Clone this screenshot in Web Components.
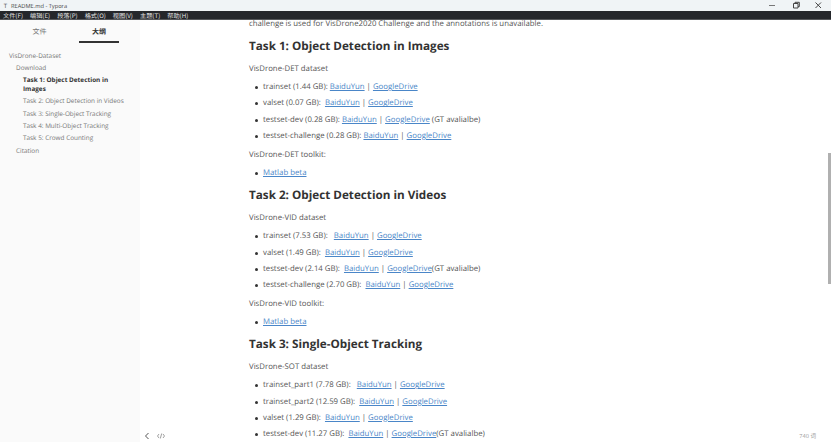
<!DOCTYPE html>
<html lang="en">
<head>
<meta charset="utf-8">
<title>README.md - Typora</title>
<style>
    html, body { margin: 0; height: 100%; overflow: hidden; background: #fff; }
    body { font-family: "Open Sans", "Noto Sans CJK SC", sans-serif; text-rendering: geometricPrecision; }
</style>
</head>
<body>
<typora-window>
    <typora-titlebar slot="titlebar" title-text="README.md - Typora"></typora-titlebar>
    <typora-menubar slot="menubar">
        <span>文件(F)</span><span>编辑(E)</span><span>段落(P)</span><span>格式(O)</span><span>视图(V)</span><span>主题(T)</span><span>帮助(H)</span>
    </typora-menubar>
    <outline-sidebar slot="sidebar">
        <outline-item level="0">VisDrone-Dataset</outline-item>
        <outline-item level="1">Download</outline-item>
        <outline-item level="2" active>Task 1: Object Detection in Images</outline-item>
        <outline-item level="2">Task 2: Object Detection in Videos</outline-item>
        <outline-item level="2">Task 3: Single-Object Tracking</outline-item>
        <outline-item level="2">Task 4: Multi-Object Tracking</outline-item>
        <outline-item level="2">Task 5: Crowd Counting</outline-item>
        <outline-item level="1">Citation</outline-item>
    </outline-sidebar>
    <md-document slot="document">
        <md-para clipped>challenge is used for VisDrone2020 Challenge and the annotations is unavailable.</md-para>
        <md-heading>Task 1: Object Detection in Images</md-heading>
        <md-para>VisDrone-DET dataset</md-para>
        <md-list>
            <md-item>trainset (1.44 GB): <md-link>BaiduYun</md-link> | <md-link>GoogleDrive</md-link></md-item>
            <md-item>valset (0.07 GB): &nbsp;<md-link>BaiduYun</md-link> | <md-link>GoogleDrive</md-link></md-item>
            <md-item>testset-dev (0.28 GB): <md-link>BaiduYun</md-link> | <md-link>GoogleDrive</md-link> (GT avalialbe)</md-item>
            <md-item>testset-challenge (0.28 GB): <md-link>BaiduYun</md-link> | <md-link>GoogleDrive</md-link></md-item>
        </md-list>
        <md-para>VisDrone-DET toolkit:</md-para>
        <md-list>
            <md-item><md-link>Matlab beta</md-link></md-item>
        </md-list>
        <md-heading>Task 2: Object Detection in Videos</md-heading>
        <md-para>VisDrone-VID dataset</md-para>
        <md-list>
            <md-item>trainset (7.53 GB): &nbsp; <md-link>BaiduYun</md-link> | <md-link>GoogleDrive</md-link></md-item>
            <md-item>valset (1.49 GB): &nbsp;<md-link>BaiduYun</md-link> | <md-link>GoogleDrive</md-link></md-item>
            <md-item>testset-dev (2.14 GB): &nbsp;<md-link>BaiduYun</md-link> | <md-link>GoogleDrive</md-link>(GT avalialbe)</md-item>
            <md-item>testset-challenge (2.70 GB): &nbsp;<md-link>BaiduYun</md-link> | <md-link>GoogleDrive</md-link></md-item>
        </md-list>
        <md-para>VisDrone-VID toolkit:</md-para>
        <md-list>
            <md-item><md-link>Matlab beta</md-link></md-item>
        </md-list>
        <md-heading>Task 3: Single-Object Tracking</md-heading>
        <md-para>VisDrone-SOT dataset</md-para>
        <md-list>
            <md-item>trainset_part1 (7.78 GB): &nbsp; <md-link>BaiduYun</md-link> | <md-link>GoogleDrive</md-link></md-item>
            <md-item>trainset_part2 (12.59 GB): &nbsp;<md-link>BaiduYun</md-link> | <md-link>GoogleDrive</md-link></md-item>
            <md-item>valset (1.29 GB): &nbsp;<md-link>BaiduYun</md-link> | <md-link>GoogleDrive</md-link></md-item>
            <md-item>testset-dev (11.27 GB): &nbsp;<md-link>BaiduYun</md-link> | <md-link>GoogleDrive</md-link>(GT avalialbe)</md-item>
        </md-list>
    </md-document>
    <typora-footer slot="footer" words="740 词"></typora-footer>
</typora-window>

<script>
function defineElement(name, markup, setup) {
    customElements.define(name, class extends HTMLElement {
        constructor() {
            super();
            this.attachShadow({mode: "open"});
            this.shadowRoot.innerHTML = markup;
            if(setup) {
                setup(this);
            }
        }
    });
}

defineElement("typora-window", `
<style>
    :host { display: grid; grid-template-columns: 140px 1fr; grid-template-rows: 11px 9px 1fr; width: 831px; height: 442px; position: relative; overflow: hidden; }
    .title { grid-column: 1 / 3; }
    .menu { grid-column: 1 / 3; }
    .main { position: relative; overflow: hidden; min-height: 0; }
    .thumb { position: absolute; right: 0; top: 133px; width: 3px; height: 131px; background: #b0b0b0; }
</style>
<div class="title"><slot name="titlebar"></slot></div>
<div class="menu"><slot name="menubar"></slot></div>
<slot name="sidebar"></slot>
<div class="main">
    <slot name="document"></slot>
    <slot name="footer"></slot>
    <div class="thumb"></div>
</div>
`);

defineElement("typora-titlebar", `
<style>
    :host { display: flex; align-items: center; height: 11px; background: #f0f4f6; color: #444; font-size: 5.7px; font-family: "Open Sans", sans-serif; }
    .logo { width: 11px; text-align: center; font-size: 6px; }
    .name { flex: 1; }
    .buttons { display: flex; }
    .buttons svg { width: 23px; height: 11px; display: block; }
</style>
<span class="logo">T</span><span class="name"></span>
<div class="buttons">
    <svg viewBox="0 0 23 11"><path d="M7 5.5h6" stroke="#777" fill="none"/></svg>
    <svg viewBox="0 0 23 11"><path d="M8.5 3.5h4.5v4.5h-4.5zM10 3.5v-1.2h4.3v4.3h-1.3" stroke="#444" fill="none"/></svg>
    <svg viewBox="0 0 23 11"><path d="M7.5 2.5l5.5 5.5M13 2.5l-5.5 5.5" stroke="#444" fill="none"/></svg>
</div>
`, (el) => {
    el.shadowRoot.querySelector(".name").textContent = el.getAttribute("title-text");
});

defineElement("typora-menubar", `
<style>
    :host { display: flex; align-items: center; height: 9px; box-sizing: border-box; background: #25272b; border-bottom: 1px solid #55575a; color: #e4e4e4; font-size: 6.2px; padding-left: 3px; gap: 7px; font-family: "Noto Sans CJK SC", "Open Sans", sans-serif; white-space: nowrap; }
</style>
<slot></slot>
`);

defineElement("outline-sidebar", `
<style>
    :host { display: block; background: #fafafa; color: #777; font-size: 6.4px; overflow: hidden; }
    .tabs { display: grid; grid-template-columns: 79px 40px; height: 24px; font-family: "Noto Sans CJK SC", sans-serif; font-size: 7px; text-align: center; }
    .tabs span { padding-top: 7px; box-sizing: border-box; }
    .tabs .on { color: #333; font-weight: 700; border-bottom: 2px solid #333; height: 23px; }
    .list { padding: 6px 4px 0 9px; display: flex; flex-direction: column; }
</style>
<div class="tabs"><span>文件</span><span class="on">大纲</span></div>
<div class="list"><slot></slot></div>
`);

defineElement("outline-item", `
<style>
    :host { display: block; line-height: 8.7px; padding: 1.8px 4px 1.8px 0; }
    :host([level="1"]) { padding-left: 7px; }
    :host([level="2"]) { padding-left: 14px; }
    :host([active]) { color: #333; font-weight: 700; }
</style>
<slot></slot>
`);

defineElement("md-document", `
<style>
    :host { display: block; width: 530px; margin-left: 109px; color: #555; font-size: 7.8px; line-height: 12px; }
</style>
<slot></slot>
`);

defineElement("md-para", `
<style>
    :host { display: block; margin: 4.5px 0; white-space: nowrap; }
    :host([clipped]) { margin: 0; height: 12.2px; transform: translateY(-2px); }
</style>
<slot></slot>
`);

defineElement("md-heading", `
<style>
    :host { display: block; font-size: 11.7px; font-weight: 700; color: #333; line-height: 18px; margin: 4.6px 0 8px; white-space: nowrap; }
</style>
<slot></slot>
`);

defineElement("md-list", `
<style>
    :host { display: block; padding-left: 14px; }
</style>
<slot></slot>
`);

defineElement("md-item", `
<style>
    :host { display: block; position: relative; height: 16.2px; line-height: 16.2px; white-space: nowrap; }
    .dot { position: absolute; left: -8.5px; top: 7px; width: 3px; height: 3px; border-radius: 50%; background: #333; }
</style>
<span class="dot"></span><slot></slot>
`);

// no whitespace around the slot here: an inline host would underline it
defineElement("md-link", `<style>:host { color: #4a86c8; text-decoration: underline; }</style><slot></slot>`);

defineElement("typora-footer", `
<style>
    :host { position: absolute; left: 0; right: 0; bottom: 0; height: 12px; display: flex; align-items: center; color: #999; font-size: 5.6px; }
    svg { display: block; }
    .left { display: flex; gap: 7px; margin-left: 4px; align-items: center; }
    .words { margin-left: auto; margin-right: 15px; }
</style>
<div class="left">
    <svg width="6" height="8" viewBox="0 0 6 8"><path d="M4.5 1L1.5 4l3 3" fill="none" stroke="#555"/></svg>
    <svg width="8" height="6" viewBox="0 0 8 6"><path d="M2 1L.5 3 2 5M6 1l1.5 2L6 5M4.7.5L3.3 5.5" fill="none" stroke="#777" stroke-width=".7"/></svg>
</div>
<span class="words"></span>
`, (el) => {
    el.shadowRoot.querySelector(".words").textContent = el.getAttribute("words");
});
</script>
</body>
</html>
